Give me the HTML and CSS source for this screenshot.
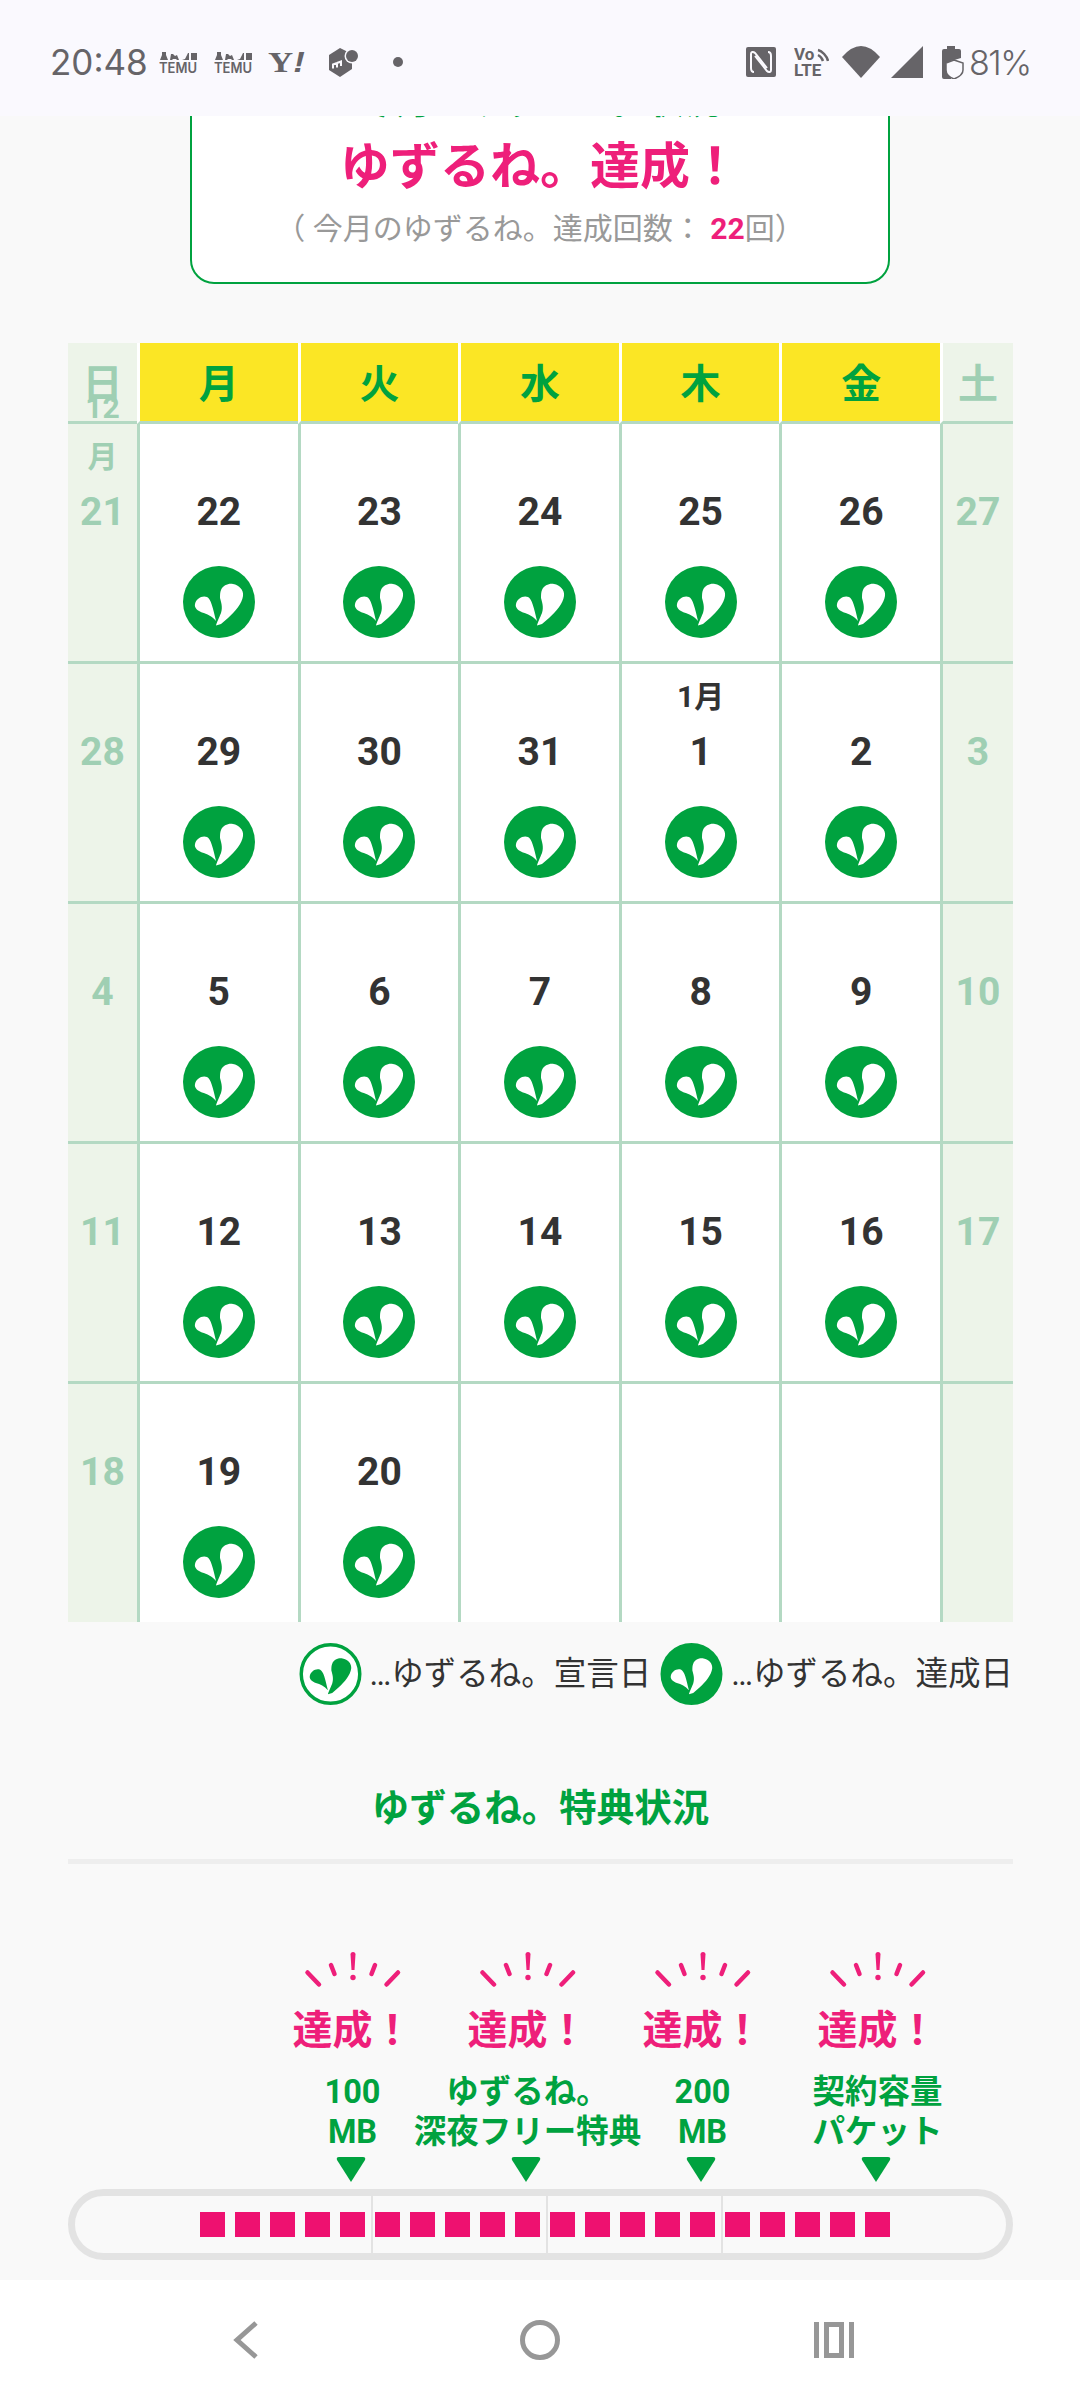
FILE: index.html
```html
<!DOCTYPE html>
<html lang="ja">
<head>
    <meta charset="UTF-8">
    <meta name="viewport" content="width=device-width, initial-scale=1.0">
    <title>ゆずるね。</title>
    <link rel="stylesheet" href="styles.css">
</head>
<body>

<svg class="defs" width="0" height="0">
    <symbol id="leaf" viewBox="0 0 72 72">
        <path d="M38 24C40 19 46 17 50 18C56 19 61 24 60 30C59 37 53 45 45 52L38 58L33 59.500C33.500 57 36 52 38 47C40 41 38 36 37 32C37 29 37 26 38 24Z"/>
        <path d="M12 38C13 33 19 29 24 31C28 33 30 42 33 55C29 50 24 48 19 46.500C15 45 11 42 12 38Z"/>
    </symbol>
    <symbol id="done" viewBox="0 0 72 72">
        <circle cx="36" cy="36" r="36" fill="#00a23f"/>
        <use href="#leaf" fill="#fff"/>
    </symbol>
    <symbol id="temu" viewBox="0 0 38 21">
        <path d="M3 0h4v3l2 5H1l2-5zM12 2h2l2 2 2-1 2 5h-2l-1-1h-3l-1 1h-2zM23 8l3-1 3-6h1v7zM32 1h6v7h-6z"/>
        <text class="temu-text" x="0" y="21" textLength="38" lengthAdjust="spacingAndGlyphs">TEMU</text>
    </symbol>
    <symbol id="spark" viewBox="0 0 100 40">
        <path d="M47.500 4.500a2.500 2.500 0 0 1 5 0L51.500 20h-3z"/>
        <circle cx="50" cy="27.500" r="2.700"/>
        <path class="ray" d="M28 15L31.500 24M72 15L68.500 24M4.500 22.500L16 34.500M95 22.500L83.500 34.500"/>
    </symbol>
    <symbol id="mark" viewBox="0 0 30 25">
        <path d="M3 0H27Q30 0 29 3L15 25L1 3Q0 0 3 0Z"/>
    </symbol>
</svg>

<header class="status">
    <div class="status-left">
        <span class="clock">20:48</span>
        <svg class="ic temu"><use href="#temu"/></svg>
        <svg class="ic temu temu2"><use href="#temu"/></svg>
        <span class="yahoo">Y<i>!</i></span>
        <svg class="ic mercari" viewBox="0 0 30 29">
            <path d="M11 0L0 7V22L11 29L23 21V6Z"/>
            <circle cx="23" cy="8" r="7.500" fill="#faf9fe"/>
            <circle cx="23" cy="8" r="6"/>
            <path class="m" d="M4 20.500V16.500L8 15V19.500M8 15L12 13.500V18"/>
        </svg>
        <span class="dot"></span>
    </div>
    <div class="status-right">
        <svg class="ic nfc" viewBox="0 0 30 30">
            <rect width="30" height="30" rx="2"/>
            <path class="nfc-line" d="M8 25C5 25 5 23 5 21V7C5 5 7 4 9 6L21 21M22 5C25 5 25 7 25 9V23C25 25 23 26 21 24L9 9"/>
        </svg>
        <svg class="ic volte" viewBox="0 0 35 30">
            <text class="volte-text" x="0" y="13">Vo</text>
            <text class="volte-text" x="0" y="29">LTE</text>
            <path class="volte-arc" d="M24 3C28 4 33 9 34 14M24 8C26 9 28 11 29 14"/>
        </svg>
        <svg class="ic wifi" viewBox="0 0 38 32">
            <path d="M0 11Q19 -11 38 11L19 32Z"/>
        </svg>
        <svg class="ic signal" viewBox="0 0 32 32">
            <path d="M32 0V32H0Z"/>
        </svg>
        <svg class="ic battery" viewBox="0 0 22 33">
            <path d="M5 0H13V3H17Q19 3 19 5V12L9 15V33H2Q0 33 0 31V5Q0 3 2 3H5Z"/>
            <path class="shield" d="M12 14L21 17V24C21 28 17 31 12 33C7 31 4 28 4 24V17Z"/>
        </svg>
        <span class="batt">81%</span>
    </div>
</header>

<main class="page">
    <section class="card">
        <p class="card-top">今月のゆずるね。状況</p>
        <h2 class="card-head">ゆずるね。達成！</h2>
        <p class="card-sub">（ 今月のゆずるね。達成回数： <b>22</b>回）</p>
    </section>

    <div class="cal">
        <div class="wk side">日</div><div class="wk">月</div><div class="wk">火</div><div class="wk">水</div><div class="wk">木</div><div class="wk">金</div><div class="wk side">土</div>

        <div class="day side"><div class="mon"><span>12</span><span>月</span></div><div class="num">21</div></div>
        <div class="day"><div class="mon"></div><div class="num">22</div><svg class="stamp"><use href="#done"/></svg></div>
        <div class="day"><div class="mon"></div><div class="num">23</div><svg class="stamp"><use href="#done"/></svg></div>
        <div class="day"><div class="mon"></div><div class="num">24</div><svg class="stamp"><use href="#done"/></svg></div>
        <div class="day"><div class="mon"></div><div class="num">25</div><svg class="stamp"><use href="#done"/></svg></div>
        <div class="day"><div class="mon"></div><div class="num">26</div><svg class="stamp"><use href="#done"/></svg></div>
        <div class="day side"><div class="mon"></div><div class="num">27</div></div>

        <div class="day side"><div class="mon"></div><div class="num">28</div></div>
        <div class="day"><div class="mon"></div><div class="num">29</div><svg class="stamp"><use href="#done"/></svg></div>
        <div class="day"><div class="mon"></div><div class="num">30</div><svg class="stamp"><use href="#done"/></svg></div>
        <div class="day"><div class="mon"></div><div class="num">31</div><svg class="stamp"><use href="#done"/></svg></div>
        <div class="day"><div class="mon"><span>1月</span></div><div class="num">1</div><svg class="stamp"><use href="#done"/></svg></div>
        <div class="day"><div class="mon"></div><div class="num">2</div><svg class="stamp"><use href="#done"/></svg></div>
        <div class="day side"><div class="mon"></div><div class="num">3</div></div>

        <div class="day side"><div class="mon"></div><div class="num">4</div></div>
        <div class="day"><div class="mon"></div><div class="num">5</div><svg class="stamp"><use href="#done"/></svg></div>
        <div class="day"><div class="mon"></div><div class="num">6</div><svg class="stamp"><use href="#done"/></svg></div>
        <div class="day"><div class="mon"></div><div class="num">7</div><svg class="stamp"><use href="#done"/></svg></div>
        <div class="day"><div class="mon"></div><div class="num">8</div><svg class="stamp"><use href="#done"/></svg></div>
        <div class="day"><div class="mon"></div><div class="num">9</div><svg class="stamp"><use href="#done"/></svg></div>
        <div class="day side"><div class="mon"></div><div class="num">10</div></div>

        <div class="day side"><div class="mon"></div><div class="num">11</div></div>
        <div class="day"><div class="mon"></div><div class="num">12</div><svg class="stamp"><use href="#done"/></svg></div>
        <div class="day"><div class="mon"></div><div class="num">13</div><svg class="stamp"><use href="#done"/></svg></div>
        <div class="day"><div class="mon"></div><div class="num">14</div><svg class="stamp"><use href="#done"/></svg></div>
        <div class="day"><div class="mon"></div><div class="num">15</div><svg class="stamp"><use href="#done"/></svg></div>
        <div class="day"><div class="mon"></div><div class="num">16</div><svg class="stamp"><use href="#done"/></svg></div>
        <div class="day side"><div class="mon"></div><div class="num">17</div></div>

        <div class="day side"><div class="mon"></div><div class="num">18</div></div>
        <div class="day"><div class="mon"></div><div class="num">19</div><svg class="stamp"><use href="#done"/></svg></div>
        <div class="day"><div class="mon"></div><div class="num">20</div><svg class="stamp"><use href="#done"/></svg></div>
        <div class="day"></div>
        <div class="day"></div>
        <div class="day"></div>
        <div class="day side"></div>
    </div>

    <div class="legend">
        <svg class="legend-ic" viewBox="0 0 72 72">
            <circle cx="36" cy="36" r="34" fill="#fff" stroke="#00a23f" stroke-width="4"/>
            <use href="#leaf" fill="#00a23f" width="72" height="72"/>
        </svg>
        <span class="legend-text">…ゆずるね。宣言日</span>
        <svg class="legend-ic"><use href="#done"/></svg>
        <span class="legend-text">…ゆずるね。達成日</span>
    </div>

    <h3 class="perk-title">ゆずるね。特典状況</h3>

    <div class="goals">
        <div class="goal">
            <svg class="spark"><use href="#spark"/></svg>
            <div class="goal-ok">達成！</div>
            <div class="goal-name">100<br>MB</div>
            <svg class="mark"><use href="#mark"/></svg>
        </div>
        <div class="goal">
            <svg class="spark"><use href="#spark"/></svg>
            <div class="goal-ok">達成！</div>
            <div class="goal-name">ゆずるね。<br>深夜フリー特典</div>
            <svg class="mark"><use href="#mark"/></svg>
        </div>
        <div class="goal">
            <svg class="spark"><use href="#spark"/></svg>
            <div class="goal-ok">達成！</div>
            <div class="goal-name">200<br>MB</div>
            <svg class="mark"><use href="#mark"/></svg>
        </div>
        <div class="goal">
            <svg class="spark"><use href="#spark"/></svg>
            <div class="goal-ok">達成！</div>
            <div class="goal-name">契約容量<br>パケット</div>
            <svg class="mark"><use href="#mark"/></svg>
        </div>
    </div>

    <div class="bar">
        <div class="seg"><i></i><i></i><i></i><i></i><i></i></div>
        <div class="seg"><i></i><i></i><i></i><i></i><i></i></div>
        <div class="seg"><i></i><i></i><i></i><i></i><i></i></div>
        <div class="seg"><i></i><i></i><i></i><i></i><i></i></div>
    </div>
</main>

<nav class="nav">
    <svg class="nav-ic" viewBox="0 0 40 40">
        <path d="M36 3L17 20L36 37"/>
    </svg>
    <svg class="nav-ic" viewBox="0 0 40 40">
        <circle cx="20" cy="20" r="17.500"/>
    </svg>
    <svg class="nav-ic" viewBox="0 0 40 40">
        <path d="M2.500 2V38M37.500 2V38"/>
        <rect x="12.500" y="4.500" width="15" height="31"/>
    </svg>
</nav>

</body>
</html>
```
FILE: styles.css
```css
* {
    box-sizing: border-box;
}

body {
    margin: 0;
    width: 1080px;
    height: 2400px;
    overflow: hidden;
    display: flex;
    flex-direction: column;
    font-family: Roboto, "Noto Sans CJK JP", sans-serif;
    background-color: #f9f9f9;
}

.defs {
    display: block;
    height: 0;
}

.temu-text {
    font: 600 14px Inter, sans-serif;
}

.ray {
    fill: none;
    stroke: #ee1f7a;
    stroke-width: 4.5;
    stroke-linecap: round;
}

/* status bar */
.status {
    flex: none;
    height: 116px;
    padding: 0 52px 0 50px;
    display: flex;
    align-items: center;
    justify-content: space-between;
    background-color: #faf9fe;
    color: #666468;
    position: relative;
    z-index: 1;
}

.status-left,
.status-right {
    display: flex;
    align-items: center;
    height: 40px;
    margin-top: 8px;
}

.ic {
    display: block;
    fill: #666468;
}

.clock {
    width: 96px;
    font: 400 35px Inter, sans-serif;
    white-space: nowrap;
}

.temu {
    width: 38px;
    height: 21px;
    margin-left: 13px;
}

.temu2 {
    margin-left: 17px;
}

.yahoo {
    width: 38px;
    margin-left: 16px;
    font: 700 29px "Liberation Serif", serif;
    white-space: nowrap;
    transform: scaleX(1.2);
    transform-origin: left center;
}

.yahoo i {
    font-family: "Liberation Sans", sans-serif;
}

.mercari {
    width: 30px;
    height: 29px;
    margin-left: 23px;
}

.m {
    fill: none;
    stroke: #faf9fe;
    stroke-width: 2;
}

.dot {
    width: 10px;
    height: 10px;
    margin-left: 34px;
    border-radius: 50%;
    background-color: #666468;
}

.nfc {
    width: 30px;
    height: 30px;
}

.nfc-line {
    fill: none;
    stroke: #faf9fe;
    stroke-width: 2;
}

.volte {
    width: 35px;
    height: 30px;
    margin-left: 18px;
}

.volte-text {
    font: 700 17px Roboto, sans-serif;
    fill: #666468;
}

.volte-arc {
    fill: none;
    stroke: #666468;
    stroke-width: 2.5;
}

.wifi {
    width: 38px;
    height: 32px;
    margin-left: 13px;
}

.signal {
    width: 32px;
    height: 32px;
    margin-left: 11px;
}

.battery {
    width: 22px;
    height: 33px;
    margin-left: 19px;
}

.shield {
    fill: #faf9fe;
    stroke: #666468;
    stroke-width: 1.500;
}

.batt {
    width: 59px;
    margin-left: 5px;
    font: 300 34px Inter, sans-serif;
    letter-spacing: -1.500px;
    white-space: nowrap;
}

/* scrolled page */
.page {
    flex: 1;
    min-height: 0;
    overflow: hidden;
}

.card {
    width: 700px;
    margin: -41px auto 0;
    padding-bottom: 33px;
    background-color: #fff;
    border: 2px solid #00a23f;
    border-radius: 24px;
    text-align: center;
}

.card-top {
    margin: 0;
    font-size: 36px;
    font-weight: 700;
    line-height: 50px;
    color: #00a23f;
}

.card-head {
    margin: 5px 0 0;
    font-size: 50px;
    font-weight: 700;
    line-height: 70px;
    color: #ee1f7a;
}

.card-sub {
    margin: 7px 0 0;
    font-size: 30px;
    line-height: 40px;
    color: #999;
}

.card-sub b {
    color: #ee1f7a;
}

/* calendar */
.cal {
    margin: 59px 67px 0 68px;
    display: grid;
    grid-template-columns: 69px repeat(5, 160.6px) 1fr;
}

.wk {
    height: 81px;
    padding-bottom: 3px;
    display: flex;
    align-items: center;
    justify-content: center;
    background-color: #fbe625;
    border-left: 3px solid #fff;
    border-bottom: 3px solid #b4d9c3;
    font-size: 40px;
    font-weight: 700;
    color: #00a23f;
}

.wk.side {
    background-color: #edf4e9;
    color: #9fcfb3;
}

.wk:first-child {
    border-left: 0;
}

.day {
    height: 240px;
    padding-top: 8px;
    display: flex;
    flex-direction: column;
    align-items: center;
    background-color: #fff;
    border-left: 3px solid #b4d9c3;
    border-bottom: 3px solid #b4d9c3;
    color: #333;
}

.day.side {
    background-color: #edf4e9;
    color: #9fcfb3;
}

.day:nth-child(7n + 1) {
    border-left: 0;
}

.day:nth-last-child(-n + 7) {
    height: 238px;
    border-bottom: 0;
}

/* a two line month label runs up out of its cell, as it does on the real page */
.mon {
    height: 49px;
    display: flex;
    flex-direction: column;
    justify-content: flex-end;
    font-size: 30px;
    font-weight: 700;
    line-height: 49px;
    text-align: center;
}

.mon span {
    flex: none;
}

.num {
    height: 46px;
    margin-top: 8px;
    font-size: 39px;
    font-weight: 700;
    line-height: 46px;
}

.stamp {
    display: block;
    width: 72px;
    height: 72px;
    margin-top: 31px;
}

/* legend */
.legend {
    margin: 21px 67px 0 0;
    display: flex;
    align-items: center;
    justify-content: flex-end;
}

.legend-ic {
    flex: none;
    width: 63px;
    height: 62px;
    margin-left: 9px;
}

.legend-text {
    margin-left: 8px;
    font-size: 32.500px;
    line-height: 62px;
    color: #333;
    white-space: nowrap;
}

/* perks */
.perk-title {
    margin: 78px 67px 0 68px;
    padding-bottom: 26px;
    border-bottom: 5px solid #eee;
    font-size: 37.500px;
    font-weight: 700;
    line-height: 50px;
    color: #00a23f;
    text-align: center;
}

.goals {
    margin: 86px 0 0 265px;
    display: flex;
}

.goal {
    width: 175px;
    display: flex;
    flex-direction: column;
    align-items: center;
}

.spark {
    display: block;
    width: 100px;
    height: 40px;
    fill: #ee1f7a;
}

.goal-ok {
    margin-top: 16px;
    font-size: 40px;
    font-weight: 700;
    line-height: 50px;
    color: #ee1f7a;
}

.goal-name {
    margin-top: 16px;
    font-size: 32.500px;
    font-weight: 700;
    line-height: 40px;
    color: #00a23f;
    text-align: center;
    white-space: nowrap;
}

.mark {
    display: block;
    width: 30px;
    height: 25px;
    margin: 5px 0 0 -3px;
    fill: #00a23f;
}

.bar {
    height: 71px;
    margin: 7px 67px 0 68px;
    padding-left: 123px;
    display: flex;
    border: 7px solid #e3e3e3;
    border-radius: 36px;
}

.seg {
    width: 175px;
    padding-left: 2px;
    display: flex;
    align-items: center;
    gap: 10px;
    border-right: 2px solid #e3e3e3;
}

.seg:last-child {
    border-right: 0;
}

.seg i {
    width: 25px;
    height: 25px;
    background-color: #ee1170;
}

/* navigation bar */
.nav {
    flex: none;
    height: 120px;
    padding-left: 220px;
    display: flex;
    align-items: center;
    gap: 260px;
    background-color: #fff;
}

.nav-ic {
    display: block;
    width: 40px;
    height: 40px;
    fill: none;
    stroke: #979797;
    stroke-width: 5;
}

.nav-ic:last-child {
    margin-left: -6px;
}
```
